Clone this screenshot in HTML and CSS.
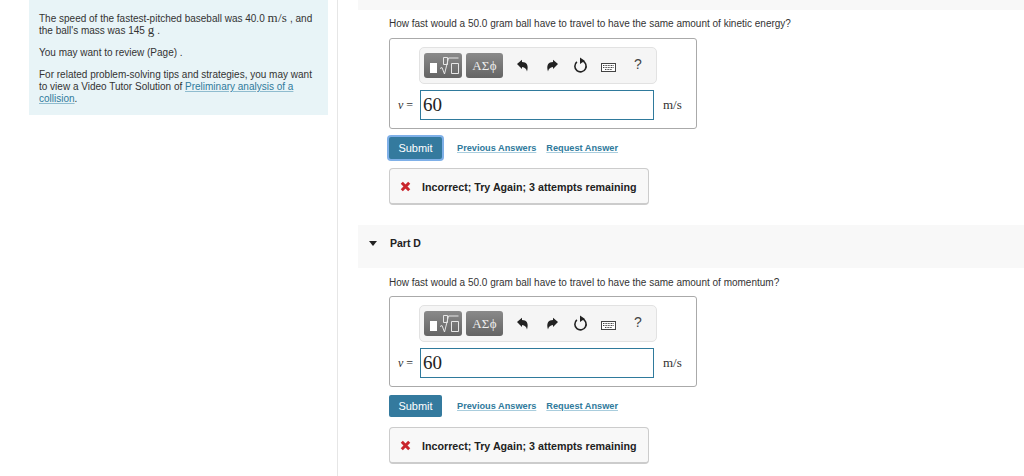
FILE: index.html
```html
<!DOCTYPE html>
<html lang="en">
<head>
  <meta charset="UTF-8">
  <title>Part D</title>
  <link rel="stylesheet" href="styles.css">
</head>
<body>
  <svg class="icon-defs" width="0" height="0">
    <symbol id="undo" viewBox="0 0 13 13"><path d="M1 5 L6 .8 V3 C10.500 3 13 6 11 12.500 C10.500 10 9 8.200 6 8 V10 Z"/></symbol>
    <symbol id="redo" viewBox="0 0 13 13"><path d="M12 5 L7 .8 V3 C2.500 3 0 6 2 12.500 C2.500 10 4 8.200 7 8 V10 Z"/></symbol>
    <symbol id="radical" viewBox="0 0 21 21"><path d="M4.500 2.500h4v7h-4zM1 13.500l2-1 2.500 6.500 4-16H19.500M12.500 8.500h7v10h-7z"/></symbol>
    <symbol id="reset" viewBox="0 0 14 16"><path class="reset-ring" d="M8.500 3.600A5.300 5.300 0 1 1 3.600 4.600"/><path class="reset-arrow" d="M6.500 .5l4.500 3-4.500 3z"/></symbol>
    <symbol id="keys" viewBox="0 0 15 9"><rect x=".5" y=".5" width="14" height="8"/><path d="M2 2.500h11M2 4.500h11M4 6.500h7" stroke-dasharray="1 .6"/></symbol>
    <symbol id="cross" viewBox="0 0 11 11"><path d="M1.800 1.800L9.200 9.200M9.200 1.800L1.800 9.200"/></symbol>
  </svg>

  <aside class="sidebar">
    <div class="intro">
      <p>The speed of the fastest-pitched baseball was 40.0 <span class="math">m/s</span> , and the ball's mass was 145 <span class="math">g</span> .</p>
      <p>You may want to review (Page) .</p>
      <p>For related problem-solving tips and strategies, you may want to view a Video Tutor Solution of <a href="#">Preliminary analysis of a collision</a>.</p>
    </div>
  </aside>

  <main class="content">
    <div class="part-bar part-bar-top"></div>

    <section class="part part-c">
      <p class="question">How fast would a 50.0 gram ball have to travel to have the same amount of kinetic energy?</p>
      <div class="answer-box">
        <div class="toolbar">
          <span class="tool-btn tool-templates">
            <span class="tpl-block"></span>
            <svg class="tpl-root" width="21" height="21"><use href="#radical"/></svg>
          </span>
          <span class="tool-btn tool-greek">ΑΣϕ</span>
          <svg class="tool-icon icon-undo" width="13" height="13"><use href="#undo"/></svg>
          <svg class="tool-icon icon-redo" width="13" height="13"><use href="#redo"/></svg>
          <svg class="tool-reset" width="15" height="17"><use href="#reset"/></svg>
          <svg class="tool-keys" width="15" height="9"><use href="#keys"/></svg>
          <span class="tool-help">?</span>
        </div>
        <div class="answer-row">
          <span class="var"><i>v</i> =</span>
          <div class="answer-input">60</div>
          <span class="unit">m/s</span>
        </div>
      </div>
      <div class="actions">
        <button class="submit submit-focus">Submit</button>
        <a href="#">Previous Answers</a>
        <a href="#">Request Answer</a>
      </div>
      <div class="feedback"><svg class="cross" width="11" height="11"><use href="#cross"/></svg>Incorrect; Try Again; 3 attempts remaining</div>
    </section>

    <div class="part-bar part-head"><span class="caret"></span><span class="part-title">Part D</span></div>

    <section class="part part-d">
      <p class="question">How fast would a 50.0 gram ball have to travel to have the same amount of momentum?</p>
      <div class="answer-box">
        <div class="toolbar">
          <span class="tool-btn tool-templates">
            <span class="tpl-block"></span>
            <svg class="tpl-root" width="21" height="21"><use href="#radical"/></svg>
          </span>
          <span class="tool-btn tool-greek">ΑΣϕ</span>
          <svg class="tool-icon icon-undo" width="13" height="13"><use href="#undo"/></svg>
          <svg class="tool-icon icon-redo" width="13" height="13"><use href="#redo"/></svg>
          <svg class="tool-reset" width="15" height="17"><use href="#reset"/></svg>
          <svg class="tool-keys" width="15" height="9"><use href="#keys"/></svg>
          <span class="tool-help">?</span>
        </div>
        <div class="answer-row">
          <span class="var"><i>v</i> =</span>
          <div class="answer-input">60</div>
          <span class="unit">m/s</span>
        </div>
      </div>
      <div class="actions">
        <button class="submit">Submit</button>
        <a href="#">Previous Answers</a>
        <a href="#">Request Answer</a>
      </div>
      <div class="feedback"><svg class="cross" width="11" height="11"><use href="#cross"/></svg>Incorrect; Try Again; 3 attempts remaining</div>
    </section>
  </main>
</body>
</html>
```

FILE: styles.css
```css
html, body {
  height: 100%;
}
body {
  margin: 0;
  display: flex;
  height: 476px;
  overflow: hidden;
  font-family: "Liberation Sans", Arial, sans-serif;
  font-size: 10px;
  color: #333;
  background-color: #fff;
}
a {
  color: #2f7a9c;
}
.icon-defs {
  position: absolute;
}
.sidebar {
  width: 337px;
  box-sizing: border-box;
  flex: none;
  padding: 0 9px 0 29px;
  height: 476px;
}
.intro {
  background-color: #e8f4f7;
  padding: 13px 10px 10px 10px;
  height: 115px;
  box-sizing: border-box;
  line-height: 12px;
}
.intro p {
  margin: 0 0 10px 0;
}
.intro p:last-child {
  margin-bottom: 0;
}
.intro a {
  text-decoration-color: #8fbccf;
}
.math {
  font-family: "Liberation Serif", serif;
  font-size: 13px;
  line-height: 10px;
  letter-spacing: .3px;
}
.content {
  flex: 1;
  border-left: 1px solid #e6e6e6;
  padding-left: 20px;
}
.part-bar {
  background-color: #f8f8f8;
}
.part-bar-top {
  height: 10px;
}
.part-head {
  height: 43px;
  display: flex;
  align-items: center;
}
.caret {
  width: 0;
  height: 0;
  margin: 0 13px 6px 11px;
  border-left: 4px solid transparent;
  border-right: 4px solid transparent;
  border-top: 5px solid #222;
}
.part-title {
  font-size: 10.500px;
  font-weight: bold;
  color: #222;
  margin-bottom: 7px;
}
.part {
  padding-left: 31px;
}
.part-c {
  padding-bottom: 20px;
}
.part-d {
  padding-top: 9px;
}
.question {
  margin: 0;
  line-height: 12px;
}
.part-c .question {
  padding-top: 8px;
}
.answer-box {
  width: 308px;
  box-sizing: border-box;
  margin-top: 8px;
  height: 91px;
  border: 1px solid #aaa;
  border-radius: 3px;
  padding: 8px 0 0 0;
}
.part-d .answer-box {
  margin-top: 7px;
}
.toolbar {
  width: 238px;
  height: 37px;
  box-sizing: border-box;
  margin-left: 29px;
  background-color: #f5f5f5;
  border: 1px solid #e2e2e2;
  border-radius: 5px;
  display: flex;
  align-items: center;
  padding-left: 4px;
}
.tool-btn {
  height: 25px;
  box-sizing: border-box;
  border-radius: 3px;
  background: linear-gradient(#8a8a8a, #646464);
  color: #eee;
  display: flex;
  align-items: center;
}
.tool-templates {
  width: 38px;
  margin-right: 4px;
  padding-left: 6px;
}
.tpl-block {
  width: 7px;
  height: 10px;
  margin: 5px 2px 0 0;
  background-color: #fff;
  flex: none;
}
.tpl-root {
  fill: none;
  stroke: #e6e6e6;
  stroke-width: 1;
  flex: none;
}
.tool-greek {
  width: 37px;
  justify-content: center;
  font-family: "Liberation Serif", serif;
  font-size: 13px;
  letter-spacing: .3px;
}
.tool-icon {
  fill: #222;
  flex: none;
}
.icon-undo {
  margin-left: 13px;
}
.icon-redo {
  margin-left: 17px;
}
.tool-reset {
  margin-left: 14px;
  fill: none;
  stroke: #222;
  stroke-width: 1.500;
  flex: none;
}
.reset-arrow {
  fill: #222;
  stroke: none;
}
.tool-keys {
  margin-left: 13px;
  margin-top: 3px;
  fill: #fff;
  stroke: #444;
  stroke-width: 1;
  flex: none;
}
.tool-help {
  margin-left: 18px;
  font-size: 14px;
  color: #444;
  margin-bottom: 3px;
}
.answer-row {
  display: flex;
  align-items: center;
  margin-top: 6px;
  font-family: "Liberation Serif", serif;
}
.var {
  width: 30px;
  box-sizing: border-box;
  text-align: right;
  padding-right: 7px;
  font-size: 12px;
}
.answer-input {
  width: 234px;
  height: 30px;
  box-sizing: border-box;
  border: 1px solid #2f7a9c;
  padding-left: 2px;
  font-size: 19px;
  line-height: 28px;
  color: #222;
}
.unit {
  margin-left: 9px;
  font-size: 13px;
}
.actions {
  display: flex;
  align-items: center;
  margin-top: 8px;
  height: 22px;
}
.actions a {
  font-weight: bold;
  font-size: 9.200px;
  margin-right: 10px;
  padding-bottom: 1px;
  text-decoration-color: #a9cddd;
}
.submit {
  width: 53px;
  height: 22px;
  margin: 0 15px 0 0;
  padding: 0 0 1px 0;
  border: none;
  border-radius: 2px;
  background-color: #347a9e;
  color: #fff;
  font-family: "Liberation Sans", Arial, sans-serif;
  font-size: 11px;
}
.submit-focus {
  box-shadow: 0 0 0 2px #7fb0e8;
}
.feedback {
  width: 260px;
  height: 37px;
  box-sizing: border-box;
  margin-top: 9px;
  display: flex;
  align-items: center;
  background-color: #f8f8f8;
  border: 1px solid #ccc;
  border-bottom-width: 2px;
  border-radius: 4px;
  font-weight: bold;
  font-size: 10.700px;
  color: #222;
  padding: 1px 0 0 10px;
}
.part-d .feedback {
  margin-top: 10px;
}
.cross {
  fill: none;
  stroke: #c9252c;
  stroke-width: 3;
  margin-right: 11px;
  flex: none;
}
```
